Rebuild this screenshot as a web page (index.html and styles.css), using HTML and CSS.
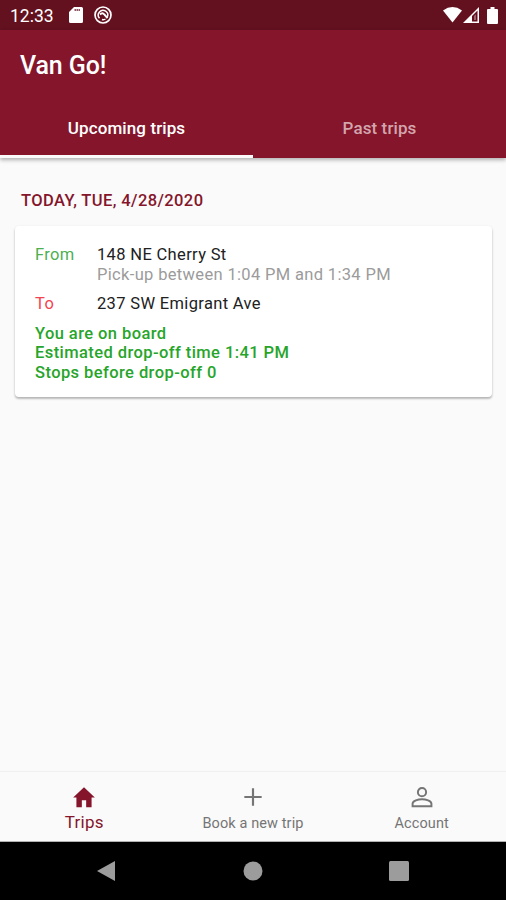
FILE: index.html
```html
<!DOCTYPE html>
<html lang="en">
<head>
    <meta charset="UTF-8">
    <meta name="viewport" content="width=device-width, initial-scale=1.0">
    <title>Van Go!</title>
    <link rel="stylesheet" href="styles.css">
</head>
<body>
    <div class="statusbar">
        <span class="clock">12:33</span>
        <svg class="sd" width="14" height="16" viewBox="0 0 14 16">
            <path fill="#fff" d="M5 0h7.500a1.500 1.500 0 0 1 1.500 1.500v13a1.500 1.500 0 0 1-1.500 1.500h-11a1.500 1.500 0 0 1-1.500-1.500V5z"/>
            <path stroke="#63101f" stroke-width="2" stroke-dasharray="1.500 .5" opacity=".7" d="M5.500 3h6"/>
        </svg>
        <svg class="sync" width="18" height="18" viewBox="0 0 18 18" fill="none" stroke="#fff">
            <circle cx="9" cy="9" r="8" stroke-width="1.700"/>
            <path stroke-width="1.500" d="M13.200 11.200A4.700 4.700 0 1 0 5.500 12.200M8 13.500q2 .5 3.500-.5"/>
            <path stroke-width="2" d="M6 8.500q2.500-2.500 4.300 0l3.200 3.700"/>
        </svg>
        <div class="signals">
            <svg width="19" height="16" viewBox="0 0 19 16">
                <path fill="#fff" d="M0 3.500Q9.500-3.300 19 3.500L9.500 15.500z"/>
            </svg>
            <svg width="16" height="16" viewBox="0 0 16 16">
                <path fill="#fff" d="M16 0v16H0z"/>
                <path fill="#63101f" d="M14.500 3.500v11H9V9z"/>
                <path fill="#fff" d="M4 14.300L9 9v5.300z"/>
                <path fill="#fff" opacity=".35" d="M11 9l2-1.700v5.700h-2z"/>
            </svg>
            <svg class="battery" width="11" height="17" viewBox="0 0 11 17">
                <path fill="#fff" d="M3.500 0h4v2H10a1 1 0 0 1 1 1v13a1 1 0 0 1-1 1H1a1 1 0 0 1-1-1V3a1 1 0 0 1 1-1h2.500z"/>
            </svg>
        </div>
    </div>

    <header class="appbar">
        <h1>Van Go!</h1>
        <div class="tabs">
            <div class="tab active"><span>Upcoming trips</span></div>
            <div class="tab"><span>Past trips</span></div>
        </div>
    </header>

    <main>
        <h2>TODAY, TUE, 4/28/2020</h2>
        <div class="card">
            <div class="row">
                <span class="label from">From</span>
                <div>
                    <div class="address">148 NE Cherry St</div>
                    <div class="pickup">Pick-up between 1:04 PM and 1:34 PM</div>
                </div>
            </div>
            <div class="row">
                <span class="label to">To</span>
                <div class="address">237 SW Emigrant Ave</div>
            </div>
            <div class="status">
                <div>You are on board</div>
                <div>Estimated drop-off time 1:41 PM</div>
                <div>Stops before drop-off 0</div>
            </div>
        </div>
    </main>

    <nav class="bottomnav">
        <div class="item active">
            <svg width="26" height="26" viewBox="0 0 24 24">
                <path fill="currentColor" d="M10 21.500v-6.500h4v6.500h5V12.500h3L12 3 2 12.500h3v9z"/>
            </svg>
            <span>Trips</span>
        </div>
        <div class="item">
            <svg width="26" height="26" viewBox="0 0 24 24">
                <path fill="currentColor" d="M20 13h-7v7h-2v-7H4v-2h7V4h2v7h7z"/>
            </svg>
            <span>Book a new trip</span>
        </div>
        <div class="item">
            <svg width="26" height="26" viewBox="0 0 24 24" fill="none" stroke="currentColor" stroke-width="1.800">
                <circle cx="12" cy="7.500" r="3.800"/>
                <path d="M3.300 20.500v-2.300c0-2.700 5.200-4.100 8.700-4.100s8.700 1.400 8.700 4.100v2.300z"/>
            </svg>
            <span>Account</span>
        </div>
    </nav>

    <div class="sysnav">
        <svg width="20" height="22" viewBox="0 0 20 22"><path fill="#9c9c9c" d="M19 1v20L1 11z"/></svg>
        <svg width="20" height="20" viewBox="0 0 20 20"><circle fill="#9c9c9c" cx="10" cy="10" r="9.500"/></svg>
        <svg width="20" height="20" viewBox="0 0 20 20"><rect fill="#9c9c9c" width="20" height="20" rx="1.500"/></svg>
    </div>
</body>
</html>
```

FILE: styles.css
```css
* {
    box-sizing: border-box;
}

body {
    margin: 0;
    height: 900px;
    display: flex;
    flex-direction: column;
    overflow: hidden;
    background-color: #fafafa;
    font-family: Roboto, "Liberation Sans", sans-serif;
    font-size: 16.5px;
}

svg {
    display: block;
    flex: none;
}

.statusbar {
    height: 30px;
    padding: 0 8px 0 10px;
    display: flex;
    align-items: center;
    background-color: #63101f;
    color: #fff;
}

.clock {
    width: 59px;
    padding-top: 2px;
    font-size: 17.5px;
}

.sync {
    margin-left: 11px;
}

.signals {
    display: flex;
    margin-left: auto;
    gap: 1px;
}

.battery {
    margin-left: 7px;
}

.appbar {
    position: relative;
    height: 128px;
    display: flex;
    flex-direction: column;
    justify-content: space-between;
    background-color: #84152b;
    color: #fff;
    box-shadow: 0 2px 4px rgba(0, 0, 0, 0.3);
}

h1 {
    margin: 0;
    padding: 21px 20px 0;
    font-size: 25px;
    line-height: 30px;
    font-weight: 500;
    letter-spacing: -0.1px;
}

.tabs {
    display: flex;
    height: 60px;
}

.tab {
    flex: 1;
    padding-top: 2px;
    display: flex;
    align-items: center;
    justify-content: center;
    border-bottom: 3px solid transparent;
    font-size: 17px;
    font-weight: 500;
    letter-spacing: 0.1px;
    color: #d3a5ad;
}

.tab.active {
    color: #fff;
    border-color: #fafafa;
}

main {
    flex: 1;
    padding: 33px 14px 0 15px;
}

h2 {
    margin: 0 0 15px 6px;
    font-size: 16.5px;
    line-height: 20px;
    font-weight: 500;
    letter-spacing: 0.4px;
    color: #84152b;
}

.card {
    height: 171px;
    padding: 19px 20px 0;
    border-radius: 4px;
    background-color: #fff;
    box-shadow: 0 2px 2px rgba(0, 0, 0, 0.2), 0 1px 3px rgba(0, 0, 0, 0.12);
    line-height: 19.6px;
    letter-spacing: 0.34px;
}

.row {
    display: flex;
    margin-bottom: 10px;
}

.label {
    width: 62px;
}

.from {
    color: #4caf50;
}

.to {
    color: #f44350;
}

.address {
    color: #212121;
}

.pickup {
    color: #9b9b9b;
}

.status {
    font-weight: 500;
    letter-spacing: 0.42px;
    color: #27a52b;
}

.bottomnav {
    height: 71px;
    display: flex;
    border-top: 1px solid #f0f0f0;
    border-bottom: 1px solid #b0b0b0;
}

.item {
    flex: 1;
    display: flex;
    flex-direction: column;
    align-items: center;
    padding-top: 12px;
    font-size: 14.5px;
    line-height: 28px;
    letter-spacing: 0.1px;
    color: #757575;
}

.item.active {
    font-size: 17px;
    line-height: 24px;
    letter-spacing: 0.3px;
    color: #84152b;
}

.sysnav {
    height: 58px;
    padding: 0 97px 0 96px;
    display: flex;
    align-items: center;
    justify-content: space-between;
    background-color: #000;
}
```
